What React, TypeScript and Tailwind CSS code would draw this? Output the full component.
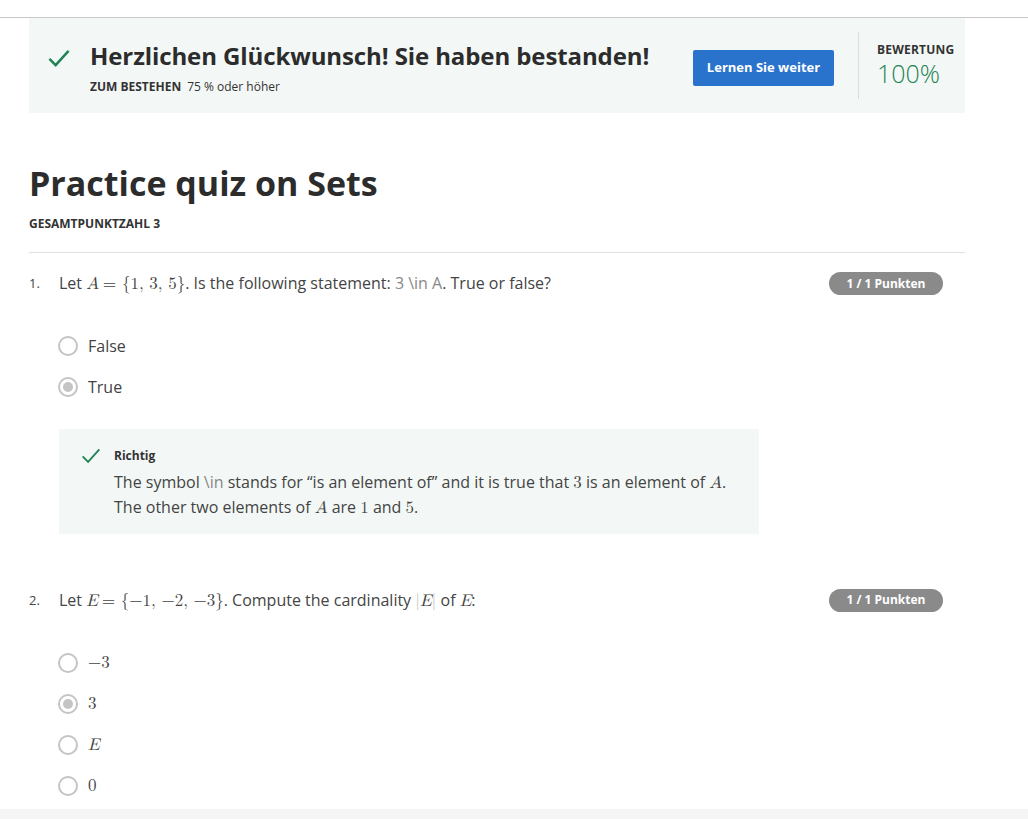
import React from "react";

const sans = "font-['Open_Sans','Liberation_Sans',sans-serif]";
const math = "font-['Latin_Modern_Math','DejaVu_Serif','Liberation_Serif',serif]";

const Check = ({ className, w = 2.2 }: { className?: string; w?: number }) => (
  <svg viewBox="0 0 24 24" className={className} fill="none" stroke="#1f8354" strokeWidth={w}>
    <path d="M2 12.5l6.5 6.5L22 4" />
  </svg>
);

const M = ({ children, i }: { children: React.ReactNode; i?: boolean }) => (
  <span className={`${math} text-[17px] ${i ? "italic" : ""}`}>{children}</span>
);

const Radio = ({ checked }: { checked?: boolean }) => (
  <span className="w-5 h-5 rounded-full border-2 border-[#c4c4c4] flex items-center justify-center bg-white shrink-0">
    {checked && <span className="w-[10px] h-[10px] rounded-full bg-[#c4c4c4]" />}
  </span>
);

const Option = ({ checked, children }: { checked?: boolean; children: React.ReactNode }) => (
  <div className="flex items-center gap-[10px] h-[41px]">
    <Radio checked={checked} />
    <span className="text-[16px] text-[#444]">{children}</span>
  </div>
);

const Pill = () => (
  <span className="shrink-0 bg-[#8a8a8a] text-white text-[12px] font-bold rounded-full w-[114px] h-[23px] flex items-center justify-center">
    1 / 1 Punkten
  </span>
);

export default function App() {
  return (
    <div className={`${sans} bg-white min-h-[819px] text-[#333] flex flex-col`}>
      <div className="h-[17px]" />
      <div className="border-t border-[#c8c8c8]" />
      <div className="px-[29px] w-[994px]">
        {/* banner */}
        <div className="bg-[#f3f8f6] h-[95px] flex items-start">
          <div className="shrink-0 pl-[16px] pt-[29px]">
            <Check className="w-[28px] h-[23px]" w={2.6} />
          </div>
          <div className="shrink-0 pl-[17px] pt-[22px] w-[620px]">
            <div className="text-[24px] font-bold text-[#2c2c2c] leading-[32px] tracking-[-0.1px] whitespace-nowrap">
              Herzlichen Glückwunsch! Sie haben bestanden!
            </div>
            <div className="text-[12px] mt-[6px] text-[#333]">
              <span className="font-bold">ZUM BESTEHEN</span>
              <span className="ml-[6px]">75 % oder höher</span>
            </div>
          </div>
          <button className="shrink-0 mt-[32px] bg-[#2a73cc] text-white text-[13px] font-bold rounded-[2px] w-[141px] h-[36px]">
            Lernen Sie weiter
          </button>
          <div className="shrink-0 ml-[24px] mt-[14px] h-[67px] border-l border-[#dcdcdc]" />
          <div className="shrink-0 ml-[18px] pt-[24px]">
            <div className="text-[12px] font-bold text-[#333] leading-[16px] tracking-[0.2px]">BEWERTUNG</div>
            <div className="text-[25px] text-[#1f8354] leading-[26px] mt-[2px] font-light">100%</div>
          </div>
        </div>

        <h1 className="mt-[48px] text-[34px] font-bold text-[#2c2c2c] leading-[44px]">Practice quiz on Sets</h1>
        <div className="mt-[11px] text-[12px] font-bold text-[#333] leading-[16px]">GESAMTPUNKTZAHL 3</div>
        <div className="mt-[20px] border-t border-[#e0e0e0] w-[936px]" />

        {/* question 1 */}
        <div className="mt-[18px] flex items-center w-[914px]">
          <span className="w-[30px] text-[13px] text-[#444]">1.</span>
          <div className="flex-1 text-[16px] text-[#444]">
            Let <M i>A</M> <M>= {"{"}1, 3, 5{"}"}</M>. Is the following statement: <span className="text-[#888]">3 \in A</span>. True or false?
          </div>
          <Pill />
        </div>
        <div className="mt-[29px] pl-[29px]">
          <Option>False</Option>
          <Option checked>True</Option>
        </div>
        <div className="ml-[30px] mt-[21px] w-[700px] h-[105px] bg-[#f3f8f6] flex">
          <div className="pl-[21px] pt-[17px]">
            <Check className="w-[22px] h-[20px]" />
          </div>
          <div className="pl-[12px] pt-[18px]">
            <div className="text-[12px] font-bold text-[#333]">Richtig</div>
            <div className="text-[16px] text-[#444] leading-[25px] mt-[5px]">
              The symbol <span className="text-[#888]">\in</span> stands for “is an element of” and it is true that <M>3</M> is an element of <M i>A</M>.
              <br />
              The other two elements of <M i>A</M> are <M>1</M> and <M>5</M>.
            </div>
          </div>
        </div>

        {/* question 2 */}
        <div className="mt-[54px] flex items-center w-[914px]">
          <span className="w-[30px] text-[13px] text-[#444]">2.</span>
          <div className="flex-1 text-[16px] text-[#444]">
            Let <M i>E</M> <M>= {"{"}−1, −2, −3{"}"}</M>. Compute the cardinality <M><span className="text-[#bbb]">|</span><i>E</i><span className="text-[#bbb]">|</span></M> of <M i>E</M>:
          </div>
          <Pill />
        </div>
        <div className="mt-[29px] pl-[29px]">
          <Option><M>−3</M></Option>
          <Option checked><M>3</M></Option>
          <Option><M i>E</M></Option>
          <Option><M>0</M></Option>
        </div>
      </div>
      <div className="mt-[3px] flex-1 bg-[#f5f5f5]" />
    </div>
  );
}
